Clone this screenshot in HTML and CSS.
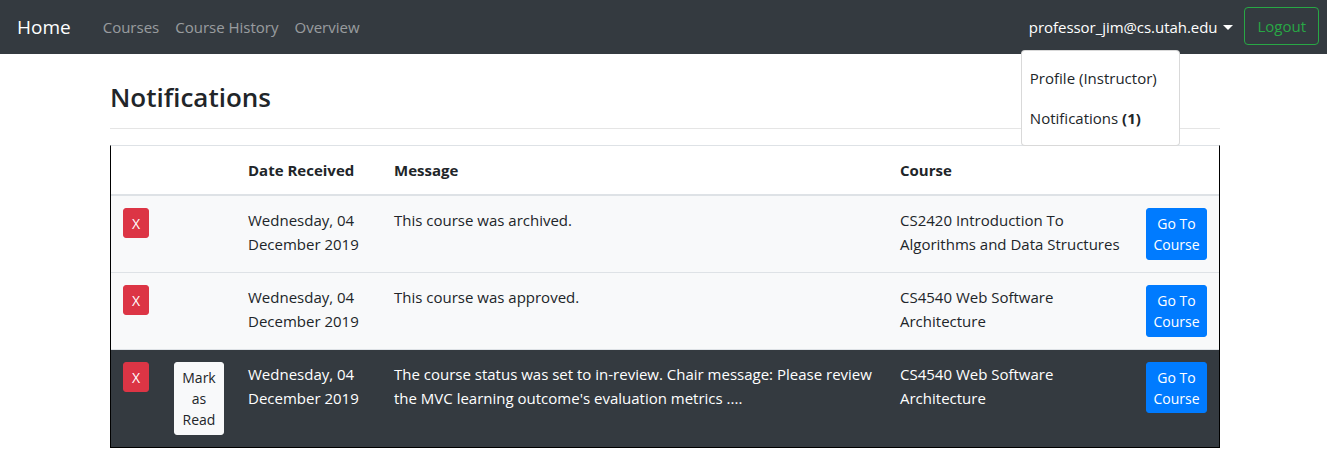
FILE: index.html
```html
<!DOCTYPE html>
<html lang="en">
<head>
<meta charset="utf-8">
<title>Notifications</title>
<link rel="stylesheet" href="styles.css">
</head>
<body>
<nav class="navbar">
  <a class="brand" href="#">Home</a>
  <ul class="nav-links">
    <li><a href="#">Courses</a></li>
    <li><a href="#">Course History</a></li>
    <li><a href="#">Overview</a></li>
  </ul>
  <div class="nav-right">
    <div class="user-menu">
      <a class="user-toggle" href="#">professor_jim@cs.utah.edu<span class="caret"></span></a>
      <div class="dropdown">
        <a class="dropdown-item" href="#">Profile (Instructor)</a>
        <a class="dropdown-item" href="#">Notifications <b>(1)</b></a>
      </div>
    </div>
    <button class="btn-logout" type="button">Logout</button>
  </div>
</nav>

<main class="container">
  <h2 class="title">Notifications</h2>
  <hr class="rule">
  <table class="notif-table">
    <colgroup>
      <col class="c-del"><col class="c-read"><col class="c-date"><col class="c-msg"><col class="c-course"><col class="c-go">
    </colgroup>
    <thead>
      <tr>
        <th></th><th></th><th>Date Received</th><th>Message</th><th>Course</th><th></th>
      </tr>
    </thead>
    <tbody>
      <tr class="row-light">
        <td><button class="btn-x" type="button">X</button></td>
        <td></td>
        <td>Wednesday, 04 December 2019</td>
        <td>This course was archived.</td>
        <td>CS2420 Introduction To Algorithms and Data Structures</td>
        <td><button class="btn-go" type="button">Go To Course</button></td>
      </tr>
      <tr class="row-light">
        <td><button class="btn-x" type="button">X</button></td>
        <td></td>
        <td>Wednesday, 04 December 2019</td>
        <td>This course was approved.</td>
        <td>CS4540 Web Software Architecture</td>
        <td><button class="btn-go" type="button">Go To Course</button></td>
      </tr>
      <tr class="row-dark">
        <td><button class="btn-x" type="button">X</button></td>
        <td><button class="btn-read" type="button">Mark as Read</button></td>
        <td>Wednesday, 04 December 2019</td>
        <td>The course status was set to in-review. Chair message: Please review the MVC learning outcome's evaluation metrics ....</td>
        <td>CS4540 Web Software Architecture</td>
        <td><button class="btn-go btn-go-short" type="button">Go To Course</button></td>
      </tr>
    </tbody>
  </table>
</main>
</body>
</html>
```

FILE: styles.css
```css
* { box-sizing: border-box; }

body {
  margin: 0;
  font-family: "Open Sans", "Noto Sans", sans-serif;
  font-size: 15px;
  line-height: 24px;
  color: #212529;
  background: #fff;
}

a { text-decoration: none; }

.navbar {
  display: flex;
  align-items: center;
  height: 54px;
  padding: 0 8px 0 17px;
  background: #343a40;
}

.brand {
  color: #fff;
  font-size: 19px;
  line-height: 30px;
  margin-right: 24px;
}

.nav-links {
  display: flex;
  list-style: none;
  margin: 0;
  padding: 0;
}

.nav-links a {
  display: block;
  padding: 8px 8px;
  color: rgba(255, 255, 255, 0.5);
}

.nav-right {
  margin-left: auto;
  display: flex;
  align-items: center;
}

.user-menu {
  position: relative;
}

.user-toggle {
  display: block;
  padding: 8px 8px;
  color: #fff;
  letter-spacing: -0.05px;
}

.caret {
  display: inline-block;
  margin-left: 6px;
  vertical-align: 3px;
  border-top: 5px solid #fff;
  border-left: 5px solid transparent;
  border-right: 5px solid transparent;
}

.dropdown {
  position: absolute;
  top: 43px;
  left: 0;
  width: 159px;
  padding: 7px 0;
  background: #fff;
  border: 1px solid rgba(0, 0, 0, 0.15);
  border-radius: 4px;
  z-index: 10;
}

.dropdown-item {
  display: block;
  padding: 8px 8px;
  color: #212529;
  white-space: nowrap;
}

.btn-logout {
  margin: 0 0 2px 3px;
  height: 38px;
  padding: 0 12px;
  font: inherit;
  color: #28a745;
  background: transparent;
  border: 1px solid #28a745;
  border-radius: 4px;
}

.container {
  width: 1110px;
  margin-left: calc(50% - 553.5px);
  padding-top: 24px;
}

.title {
  margin: 0;
  font-size: 26px;
  line-height: 38px;
  font-weight: 600;
}

.rule {
  margin: 12px 0 16px;
  border: 0;
  border-top: 1px solid rgba(0, 0, 0, 0.1);
}

.notif-table {
  width: 1110px;
  table-layout: fixed;
  border-collapse: separate;
  border-spacing: 0;
  border: 1px solid #000;
  border-top: 1px solid #dee2e6;
}

.c-del { width: 51px; }
.c-read { width: 74px; }
.c-date { width: 146px; }
.c-msg { width: 506px; }
.c-course { width: 246px; }
.c-go { width: 85px; }

.notif-table th,
.notif-table td {
  padding: 12px;
  text-align: left;
  vertical-align: top;
}

.notif-table th {
  font-weight: 700;
  vertical-align: bottom;
  border-bottom: 2px solid #dee2e6;
}

.notif-table td {
  border-top: 1px solid #dee2e6;
}

.notif-table tbody tr:first-child td {
  border-top: 0;
}

.row-light { background: #f8f9fa; }

.row-dark {
  background: #343a40;
  color: #fff;
}

.btn-x,
.btn-go,
.btn-read {
  font-family: inherit;
  font-size: 14px;
  line-height: 21px;
  border-radius: 3px;
  cursor: pointer;
}

.btn-x {
  display: block;
  width: 26px;
  height: 30px;
  padding: 0;
  color: #fff;
  background: #dc3545;
  border: 1px solid #dc3545;
}

.btn-go {
  display: block;
  width: 61px;
  height: 52px;
  padding: 3px 0;
  color: #fff;
  background: #007bff;
  border: 1px solid #007bff;
}

.btn-go-short { height: 51px; }

.btn-read {
  display: block;
  width: 50px;
  height: 73px;
  padding: 3px 0;
  color: #212529;
  background: #f8f9fa;
  border: 1px solid #f8f9fa;
}
```
